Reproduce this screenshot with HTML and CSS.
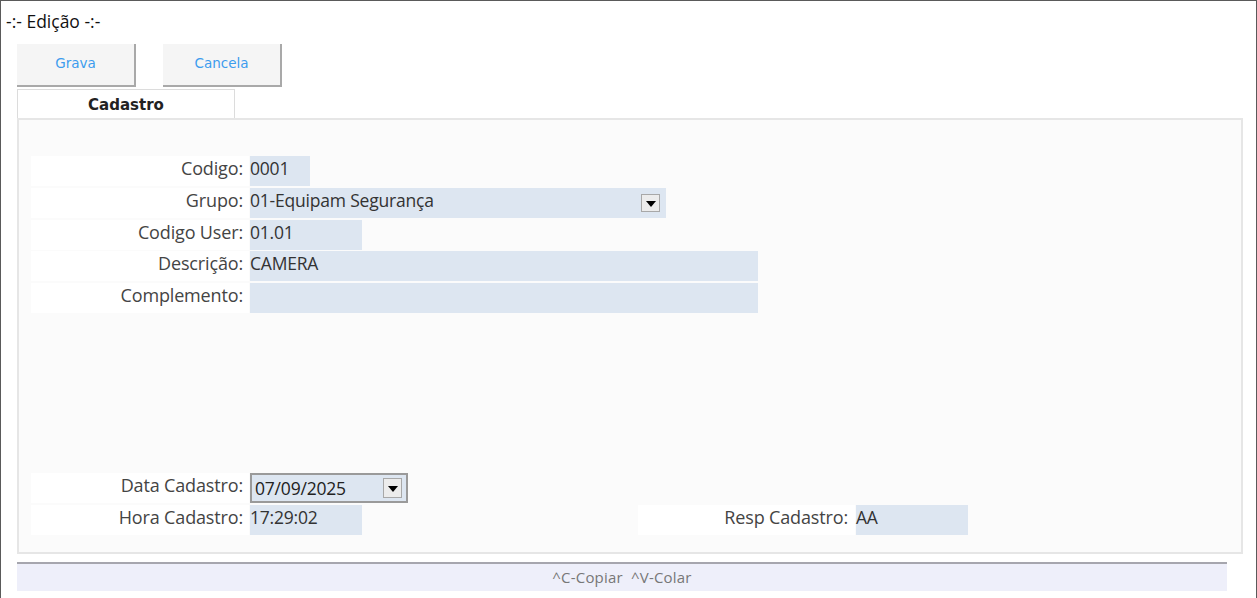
FILE: index.html
```html
<!DOCTYPE html>
<html lang="pt-BR">
<head>
    <meta charset="UTF-8">
    <title>Edição</title>
    <link rel="stylesheet" href="styles.css">
</head>
<body>
    <div class="window">
        <div class="title">-:- Edição -:-</div>

        <div class="toolbar">
            <button class="tool-btn">Grava</button>
            <button class="tool-btn">Cancela</button>
        </div>

        <div class="tabs">
            <div class="tab active">Cadastro</div>
        </div>

        <div class="panel">
            <div class="field-row">
                <div class="label">Codigo:</div>
                <div class="input w60">0001</div>
            </div>
            <div class="field-row">
                <div class="label">Grupo:</div>
                <div class="input w416 combo">
                    01-Equipam Segurança
                    <span class="drop-btn"><span class="arrow"></span></span>
                </div>
            </div>
            <div class="field-row">
                <div class="label">Codigo User:</div>
                <div class="input w112">01.01</div>
            </div>
            <div class="field-row">
                <div class="label">Descrição:</div>
                <div class="input w508">CAMERA</div>
            </div>
            <div class="field-row">
                <div class="label">Complemento:</div>
                <div class="input w508"></div>
            </div>

            <div class="spacer"></div>

            <div class="field-row">
                <div class="label">Data Cadastro:</div>
                <div class="input w158 date">
                    07/09/2025
                    <span class="drop-btn"><span class="arrow"></span></span>
                </div>
            </div>
            <div class="field-row">
                <div class="label">Hora Cadastro:</div>
                <div class="input w112">17:29:02</div>
                <div class="label resp">Resp Cadastro:</div>
                <div class="input w112">AA</div>
            </div>
        </div>

        <div class="statusbar">^C-Copiar&nbsp; ^V-Colar</div>
    </div>
</body>
</html>
```

FILE: styles.css
```css
html, body {
    margin: 0;
    padding: 0;
    background: #ffffff;
}

.window {
    width: 1257px;
    height: 598px;
    box-sizing: border-box;
    border-top: 1px solid #5a5a5a;
    border-left: 1px solid #5a5a5a;
    border-right: 1px solid #5a5a5a;
    font-family: "Open Sans", "Noto Sans", sans-serif;
    color: #333;
    overflow: hidden;
}

.title {
    height: 42px;
    padding: 8px 0 0 5px;
    box-sizing: border-box;
    font-size: 17.5px;
    line-height: 24px;
    color: #111;
}

.toolbar {
    display: flex;
    gap: 27px;
    padding: 1px 0 0 16px;
}

.tool-btn {
    width: 119px;
    height: 43px;
    padding: 0 0 4px;
    background: #f5f5f5;
    border: none;
    border-right: 2px solid #a9a9a9;
    border-bottom: 2px solid #a9a9a9;
    font-family: "DejaVu Sans", sans-serif;
    font-size: 13.5px;
    color: #3c9cee;
    cursor: pointer;
}

.tabs {
    display: flex;
    padding: 2px 0 0 16px;
}

.tab {
    width: 218px;
    height: 29px;
    box-sizing: border-box;
    border: 1px solid #dcdcdc;
    border-bottom: none;
    background: #ffffff;
    text-align: center;
    font-family: "DejaVu Sans", sans-serif;
    font-weight: bold;
    font-size: 15px;
    line-height: 30px;
    color: #222;
}

.panel {
    margin-left: 16px;
    width: 1226px;
    height: 436px;
    box-sizing: border-box;
    border: 2px solid #e6e6e6;
    background: #fbfbfb;
    padding: 36px 0 0 12px;
}

.field-row {
    display: flex;
    height: 30px;
    margin-bottom: 1.8px;
}

.label {
    width: 212px;
    height: 30px;
    padding-right: 6px;
    background: #ffffff;
    text-align: right;
    font-size: 18px;
    line-height: 24px;
    color: #444;
    letter-spacing: -0.15px;
}

.label.resp {
    margin-left: 276px;
    width: 210px;
    padding-right: 7px;
}

.input {
    position: relative;
    height: 30px;
    box-sizing: border-box;
    margin-left: 1px;
    padding-left: 0;
    background: #dde6f1;
    font-size: 17.5px;
    line-height: 24px;
    color: #333;
    letter-spacing: -0.2px;
}

.w60 { width: 60px; }
.w112 { width: 112px; }
.w158 { width: 158px; }
.w416 { width: 416px; }
.w508 { width: 508px; }

.spacer {
    height: 158px;
}

.date {
    border: 2px solid #9a9a9a;
    padding-left: 3px;
    line-height: 26px;
    color: #222;
}

.drop-btn {
    position: absolute;
    right: 6px;
    top: 6px;
    width: 19px;
    height: 18px;
    box-sizing: border-box;
    border: 1px solid #a8a8a8;
    background: #ececec;
    display: flex;
    align-items: center;
    justify-content: center;
}

.date .drop-btn {
    right: 4px;
    top: 3px;
    height: 20px;
}

.arrow {
    width: 0;
    height: 0;
    margin-top: 2px;
    border-left: 5px solid transparent;
    border-right: 5px solid transparent;
    border-top: 6px solid #000;
}

.statusbar {
    margin: 8px 0 0 16px;
    width: 1210px;
    height: 29px;
    box-sizing: border-box;
    border-top: 2px solid #a6a6ae;
    background: #eeeffa;
    text-align: center;
    font-size: 15px;
    line-height: 26px;
    color: #777;
    letter-spacing: 0.2px;
}
```
